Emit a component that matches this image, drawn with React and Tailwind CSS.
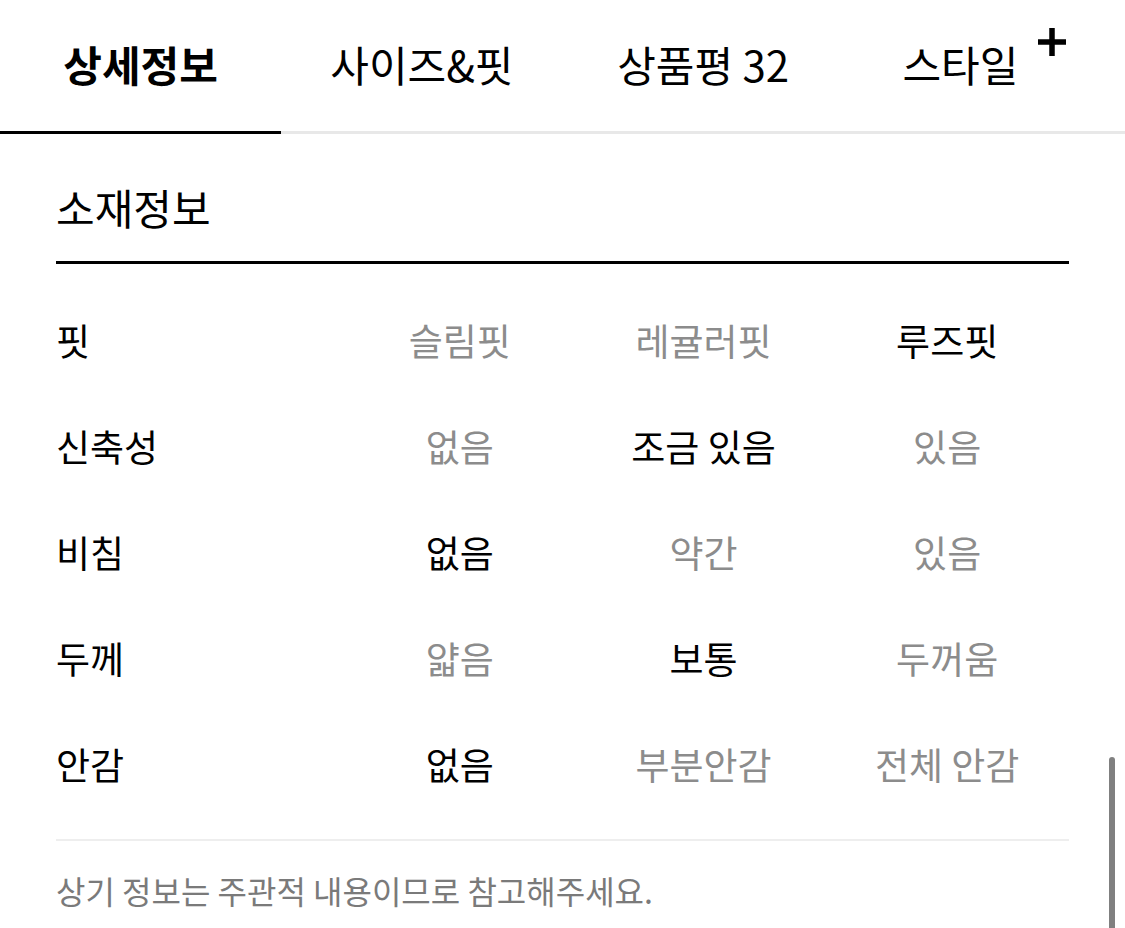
import React from "react";

const tabs = [
  { label: "상세정보", active: true },
  { label: "사이즈&핏" },
  { label: "상품평 32" },
  { label: "스타일", plus: true },
];

const rows = [
  { name: "핏", options: ["슬림핏", "레귤러핏", "루즈핏"], selected: 2 },
  { name: "신축성", options: ["없음", "조금 있음", "있음"], selected: 1 },
  { name: "비침", options: ["없음", "약간", "있음"], selected: 0 },
  { name: "두께", options: ["얇음", "보통", "두꺼움"], selected: 1 },
  { name: "안감", options: ["없음", "부분안감", "전체 안감"], selected: 0 },
];

const App = () => {
  return (
    <div
      className="relative w-[1125px] h-[928px] overflow-hidden bg-white text-black"
      style={{ fontFamily: '"Noto Sans CJK KR", "Noto Sans", sans-serif' }}
    >
      {/* tabs */}
      <div className="flex">
        {tabs.map((tab) => (
          <div
            key={tab.label}
            className={
              tab.active
                ? "flex-1 h-[134px] flex items-center justify-center border-b-[3px] border-black"
                : "flex-1 h-[134px] flex items-center justify-center border-b-[3px] border-[#e8e8e8]"
            }
          >
            <span
              className={
                tab.active
                  ? "relative text-[42px] leading-[44px] font-bold -mt-[4px]"
                  : tab.plus
                  ? "relative text-[42px] leading-[44px] -mt-[4px] mr-[48px]"
                  : "relative text-[42px] leading-[44px] -mt-[4px]"
              }
            >
              {tab.label}
              {tab.plus && (
                <svg
                  className="absolute -right-[48px] -top-[14px]"
                  width="28"
                  height="28"
                  viewBox="0 0 28 28"
                >
                  <path d="M14 0v28M0 14h28" stroke="#000" strokeWidth="5.5" />
                </svg>
              )}
            </span>
          </div>
        ))}
      </div>

      <div className="px-[56px]">
        {/* section title */}
        <div className="h-[130px] flex items-end pb-[33px] border-b-[3px] border-black">
          <h2 className="text-[42px] leading-[42px] font-normal">소재정보</h2>
        </div>

        {/* material rows */}
        <div className="pt-[23px]">
          {rows.map((row) => (
            <div
              key={row.name}
              className="grid grid-cols-[282px_1fr_1fr_1fr] h-[106px] items-center text-[37px] leading-[42px]"
            >
              <div>{row.name}</div>
              {row.options.map((opt, i) => (
                <div
                  key={opt + i}
                  className={
                    i === row.selected
                      ? "text-center text-black"
                      : "text-center text-[#8c8c8c]"
                  }
                >
                  {opt}
                </div>
              ))}
            </div>
          ))}
        </div>

        <div className="mt-[22px] h-[2px] bg-[#eeeeee]" />

        <p className="mt-[32px] text-[32px] leading-[34px] text-[#7a7a7a]">
          상기 정보는 주관적 내용이므로 참고해주세요.
        </p>
      </div>

      {/* scrollbar */}
      <div className="absolute right-[10px] top-[757px] w-[6px] h-[200px] rounded-full bg-[#808080]" />
    </div>
  );
};

export default App;
